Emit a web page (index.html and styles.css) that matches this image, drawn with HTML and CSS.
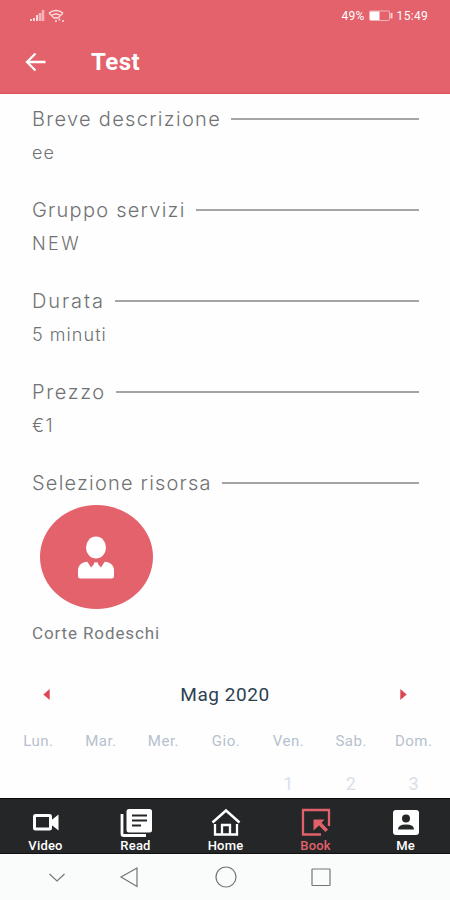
FILE: index.html
```html
<!DOCTYPE html>
<html lang="it">
<head>
    <meta charset="UTF-8">
    <meta name="viewport" content="width=device-width, initial-scale=1.0">
    <title>Test</title>
    <link rel="stylesheet" href="styles.css">
</head>
<body>
    <header>
        <div class="status">
            <svg class="signal" width="36" height="14" viewBox="0 0 36 14">
                <path d="M1 12v-2M4 12V9M7 12V6" stroke="#fbd5d7" stroke-width="2"/>
                <path d="M10 12V4M13 12V1" stroke="#f4b5b9" stroke-width="2.600"/>
                <path d="M19 4q7-5 14 0M19 4l5 5M33 4l-5 5M21.500 6.500q4.500-3 9 0M24 9.500q2-1.500 4 0" fill="none" stroke="#fbe0e1" stroke-width="1.300"/>
                <path d="M26 13v-2M29.500 9.500v2M33 11v2" stroke="#fbe0e1" stroke-width="1.500"/>
            </svg>
            <span class="percent">49%</span>
            <svg class="battery" width="24" height="12" viewBox="0 0 24 12">
                <rect x=".5" y="1" width="20" height="9.500" rx="1" fill="none" stroke="#f3b3b7"/>
                <rect x="1" y="1.500" width="9.500" height="8.500" fill="#fff"/>
                <path d="M22.500 3v5.500" stroke="#f9d5d7" stroke-width="2"/>
            </svg>
            <span class="time">15:49</span>
        </div>
        <div class="bar">
            <svg width="22" height="20" viewBox="0 0 22 20">
                <path d="M20.500 10H2M10.500 1.500L2 10l8.500 8.500" fill="none" stroke="#fff" stroke-width="2.300"/>
            </svg>
            <h1>Test</h1>
        </div>
    </header>

    <main>
        <section>
            <h2><span class="t1">Breve descrizione</span></h2>
            <p class="v1">ee</p>
        </section>
        <section>
            <h2><span class="t2">Gruppo servizi</span></h2>
            <p class="v2">NEW</p>
        </section>
        <section>
            <h2><span class="t3">Durata</span></h2>
            <p class="v3">5 minuti</p>
        </section>
        <section>
            <h2><span class="t4">Prezzo</span></h2>
            <p class="v4">€1</p>
        </section>
        <section class="risorsa">
            <h2><span class="t5">Selezione risorsa</span></h2>
            <div class="avatar">
                <svg width="38" height="44" viewBox="0 0 38 44">
                    <ellipse cx="19" cy="11.500" rx="10" ry="11" fill="#fff"/>
                    <path d="M1 40V35Q1 27.500 8 26Q11 25 11.500 27.500L14 31.500L17 28V26.500H21V28L24 31.500L26.500 27.500Q27 25 30 26Q37 27.500 37 35V40Q37 42.500 34.500 42.500H3.500Q1 42.500 1 40z" fill="#fff"/>
                </svg>
            </div>
            <div class="nome">Corte Rodeschi</div>
        </section>
    </main>

    <div class="calendar">
        <div class="month">
            <svg width="7" height="11" viewBox="0 0 7 12"><path d="M7 0v12L0 6z" fill="#dd4654"/></svg>
            <span>Mag 2020</span>
            <svg width="7" height="11" viewBox="0 0 7 12"><path d="M0 0v12l7-6z" fill="#dd4654"/></svg>
        </div>
        <div class="week">
            <span>Lun.</span><span>Mar.</span><span>Mer.</span><span>Gio.</span><span>Ven.</span><span>Sab.</span><span>Dom.</span>
        </div>
        <div class="week days">
            <span></span><span></span><span></span><span></span><span>1</span><span>2</span><span>3</span>
        </div>
    </div>

    <nav class="tabs">
        <a>
            <svg width="32" height="32" viewBox="0 0 32 32">
                <rect x="4.500" y="8.500" width="16" height="13.500" rx="1" fill="none" stroke="#fff" stroke-width="3"/>
                <path d="M21 13.500l7.500-6v16l-7.500-6z" fill="#fff"/>
            </svg>
            <span>Video</span>
        </a>
        <a>
            <svg width="32" height="32" viewBox="0 0 32 32">
                <rect x="6.500" y="2" width="25.500" height="23.500" rx="2.500" fill="#fff"/>
                <path d="M2 7v20q0 1.500 1.500 1.500H26" fill="none" stroke="#fff" stroke-width="2.800"/>
                <path d="M12 8.500h15M12 13.500h15M12 18.500h9" stroke="#242628" stroke-width="2.200"/>
            </svg>
            <span>Read</span>
        </a>
        <a>
            <svg width="32" height="32" viewBox="0 0 32 32">
                <path d="M2.500 15.500L16 3.500L29.500 15.500" fill="none" stroke="#fff" stroke-width="2.500"/>
                <path d="M5 17v10.500h22V17M12 27v-9h8v9" fill="none" stroke="#fff" stroke-width="2.300"/>
            </svg>
            <span>Home</span>
        </a>
        <a class="active">
            <svg width="32" height="32" viewBox="0 0 32 32">
                <path d="M21 27.500H3V3h26v16" fill="none" stroke="#e0616b" stroke-width="2.300"/>
                <path d="M13.500 12.500h11l-3 3.200l6.500 6.800l-2.500 2.500l-6.500-6.500l-5.500 5z" fill="#e0616b"/>
            </svg>
            <span>Book</span>
        </a>
        <a>
            <svg width="32" height="32" viewBox="0 0 32 32">
                <rect x="3" y="3" width="26" height="25" rx="3" fill="#fff"/>
                <circle cx="16" cy="11.500" r="4" fill="#242628"/>
                <path d="M8 22.500q0-5 8-5t8 5z" fill="#242628"/>
            </svg>
            <span>Me</span>
        </a>
    </nav>

    <div class="android">
        <svg width="450" height="45" viewBox="0 0 450 45" fill="none" stroke="#737577" stroke-width="1.200">
            <path d="M49.500 20l7.500 7l7.500-7"/>
            <path d="M137 14v18.500L121 23z"/>
            <circle cx="226" cy="23" r="10"/>
            <rect x="312" y="15" width="18" height="16.500" rx=".5"/>
        </svg>
    </div>
</body>
</html>
```
FILE: styles.css
```css
*{
    margin: 0;
    padding: 0;
    box-sizing: border-box;
}
body {
    width: 450px;
    height: 900px;
    overflow: hidden;
    display: flex;
    flex-direction: column;
    background-color: #fefefe;
    font-family: Roboto, "Liberation Sans", sans-serif;
}
svg {
    display: block;
    flex: none;
}
header {
    height: 94px;
    flex: none;
    background-color: #e3626b;
    border-bottom: 1px solid #d9545f;
    color: #fff;
}
.status {
    height: 31px;
    padding: 0 22px 0 30px;
    display: flex;
    align-items: center;
    font-size: 12px;
}
.signal {
    margin-right: auto;
}
.percent {
    letter-spacing: .300px;
}
.time {
    letter-spacing: .300px;
}
.battery {
    margin: 0 4px;
}
.bar {
    height: 62px;
    padding-left: 25px;
    display: flex;
    align-items: center;
}
.bar h1 {
    margin-left: 44px;
    font-size: 24px;
    line-height: 64px;
    font-weight: bold;
    letter-spacing: .500px;
}

main {
    height: 570px;
    flex: none;
    padding: 11px 31px 0 32px;
    font-family: Inter, "Open Sans", sans-serif;
    font-weight: 300;
    color: #707274;
}
section {
    height: 91px;
}
h2 {
    height: 28px;
    display: flex;
    align-items: center;
    font-size: 20px;
    font-weight: 300;
    line-height: 28px;
    white-space: nowrap;
}
h2::after {
    content: "";
    flex: 1;
    height: 2px;
    margin-left: 10px;
    background-color: #a5a5a5;
}
section p {
    margin-top: 6px;
    font-size: 18px;
    line-height: 28px;
}
.t1 {
    letter-spacing: 1.300px;
}
.t2 {
    letter-spacing: 1.250px;
}
.t3 {
    letter-spacing: 1.900px;
}
.t4 {
    letter-spacing: 1.650px;
}
.t5 {
    letter-spacing: 1.200px;
}
.v1, .v3 {
    letter-spacing: 1.050px;
}
.v2 {
    letter-spacing: 2.400px;
}
.v4 {
    letter-spacing: 1.300px;
}
.avatar {
    width: 113px;
    height: 104px;
    margin: 8px 0 0 7.500px;
    padding-top: 31px;
    padding-left: 37.500px;
    border-radius: 50%;
    background-color: #e3626b;
}
.nome {
    margin-top: 12px;
    font-family: Roboto, sans-serif;
    font-size: 17px;
    font-weight: 400;
    line-height: 24px;
    letter-spacing: .880px;
    color: #77797b;
}

.calendar {
    height: 134px;
    flex: none;
}
.month {
    height: 60px;
    padding: 0 43px;
    display: flex;
    align-items: center;
    justify-content: space-between;
    font-size: 19px;
    letter-spacing: .550px;
    color: #2d4150;
}
.week {
    height: 34px;
    padding: 0 5px 0 7px;
    display: grid;
    grid-template-columns: repeat(7, 1fr);
    font-size: 15px;
    line-height: 34px;
    text-align: center;
    letter-spacing: .500px;
    color: #b6c1cd;
}
.days {
    height: 40px;
    font-size: 18px;
    line-height: 51px;
    color: #d9e1e8;
}

.tabs {
    height: 56px;
    flex: none;
    display: grid;
    grid-template-columns: repeat(5, 1fr);
    background-color: #242628;
    border-top: 1px solid #08090b;
    border-bottom: 1px solid #111;
}
.tabs a {
    padding: 8px 0 0 1px;
    display: flex;
    flex-direction: column;
    align-items: center;
    font-size: 13px;
    font-weight: 500;
    line-height: 13px;
    letter-spacing: .200px;
    color: #fff;
}
.tabs .active {
    color: #e0616b;
}
.android {
    height: 46px;
    flex: none;
    background-color: #fafcfc;
}
```
